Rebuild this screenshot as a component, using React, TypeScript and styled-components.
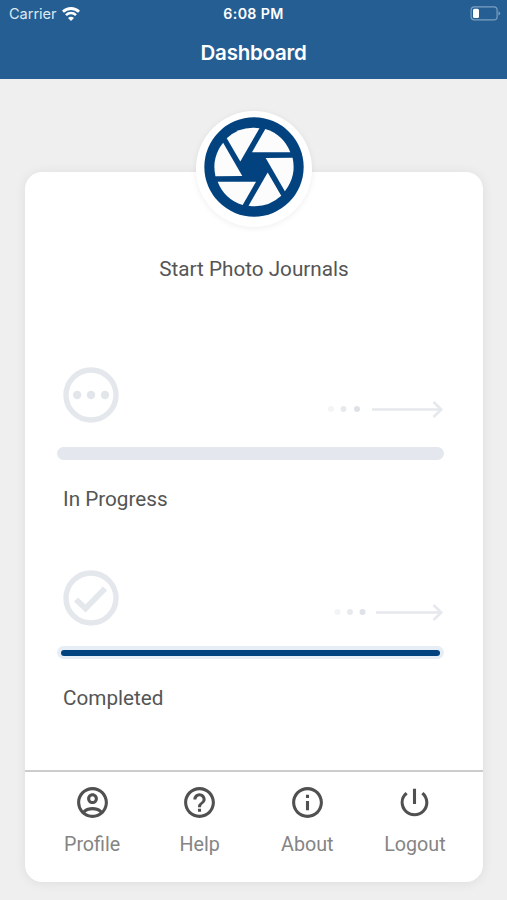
import React from 'react';
import styled, { createGlobalStyle } from 'styled-components';
import {
  MdHelpOutline,
  MdInfoOutline,
  MdOutlineAccountCircle,
  MdPowerSettingsNew,
} from 'react-icons/md';

const GlobalStyle = createGlobalStyle`
  * { box-sizing: border-box; }
  body { margin: 0; background: #efefef; font-family: Roboto, sans-serif; }
`;

const Screen = styled.div`
  width: 507px;
  height: 900px;
  display: flex;
  flex-direction: column;
  overflow: hidden;
  background: #efefef;
`;

const Header = styled.header`
  flex: none;
  height: 79px;
  background: #255e93;
  color: #fff;
  font-family: Inter, sans-serif;
`;

const StatusBar = styled.div`
  height: 27px;
  display: grid;
  grid-template-columns: 1fr auto 1fr;
  align-items: center;
  padding: 0 6px;
`;

const Carrier = styled.div`
  display: flex;
  align-items: center;
  gap: 5px;
  padding-left: 3px;
  font-size: 14.6px;
  line-height: 18px;
  letter-spacing: -0.05px;
  color: #dce8f3;
`;

const Clock = styled.div`
  font-size: 14.2px;
  line-height: 18px;
  font-weight: 600;
  letter-spacing: 0.35px;
`;

const BatterySlot = styled.div`
  display: flex;
  justify-content: flex-end;
`;

const Title = styled.h1`
  margin: 0;
  text-align: center;
  font-size: 20.5px;
  line-height: 51px;
  font-weight: 600;
  letter-spacing: -0.25px;
`;

const Card = styled.main`
  flex: none;
  width: 458px;
  height: 710px;
  margin: 93px 0 0 25px;
  display: flex;
  flex-direction: column;
  background: #fff;
  border-radius: 17px;
  box-shadow: 0 1px 12px rgba(0, 0, 0, 0.08);
`;

const Badge = styled.div`
  flex: none;
  width: 116px;
  height: 116px;
  margin: -61px auto 0;
  padding: 6px 8px;
  border-radius: 50%;
  background: #fff;
  box-shadow: 0 1px 6px rgba(0, 0, 0, 0.07);
  svg { display: block; }
`;

const StartLabel = styled.h2`
  margin: 29px 0 0;
  text-align: center;
  color: #555;
  font-size: 20.7px;
  line-height: 26px;
  font-weight: 400;
`;

const Section = styled.section<{ $top: number }>`
  margin: ${(p) => p.$top}px 39px 0 32px;
  display: flex;
  flex-direction: column;
`;

const SectionTop = styled.div`
  display: flex;
  justify-content: space-between;
  padding: 0 0 0 6px;
  height: 56px;
  svg { display: block; }
`;

const ArrowSlot = styled.div`
  padding-top: 33px;
`;

const Track = styled.div<{ $active?: boolean }>`
  height: 13px;
  margin-top: ${(p) => (p.$active ? 20 : 24)}px;
  padding: ${(p) => (p.$active ? '3.5px 4px' : '0')};
  border-radius: 7px;
  background: ${(p) => (p.$active ? '#e6edf4' : '#e4e8ee')};
`;

const Fill = styled.div`
  height: 6px;
  border-radius: 3px;
  background: #02437f;
`;

const SectionLabel = styled.div`
  margin: 27px 0 0 6px;
  color: #555;
  font-size: 20.7px;
  line-height: 25px;
`;

const TabBar = styled.nav`
  margin-top: auto;
  height: 112px;
  flex: none;
  border-top: 2px solid #ccc;
  display: grid;
  grid-template-columns: repeat(4, 107.6px);
  justify-content: center;
  padding-right: 1px;
`;

const Tab = styled.div`
  display: flex;
  flex-direction: column;
  align-items: center;
  padding-top: 12px;
  color: #505050;
`;

const TabLabel = styled.span`
  margin-top: 12px;
  color: #858585;
  font-size: 19.7px;
  line-height: 24px;
`;

const BLADES = [0, 60, 120, 180, 240, 300];

const Aperture = () => (
  <svg width="100" height="100" viewBox="-150 -150 300 300">
    <circle r="149" fill="#02437f" />
    {BLADES.map((angle) => (
      <path
        key={angle}
        d="M34 -114A119 119 0 0 1 109 -44H-6Z"
        fill="#fcfcfd"
        transform={`rotate(${angle})`}
      />
    ))}
  </svg>
);

const Wifi = () => (
  <svg width="18" height="14" viewBox="0 0 18 14" fill="none" stroke="#fff">
    <path d="M1 4.8C5.5.4 12.5.4 17 4.8" strokeWidth="2.8" />
    <path d="M4 8.2C6.8 5.4 11.2 5.4 14 8.2" strokeWidth="2.5" />
    <path d="M9 13.9 6 11Q9 8.3 12 11Z" fill="#fff" stroke="none" />
  </svg>
);

const Battery = () => (
  <svg width="31" height="15" viewBox="0 0 31 15">
    <rect x="1.1" y=".9" width="26" height="13" rx="3.2" fill="none" stroke="#7d9fc0" strokeWidth="1.2" />
    <rect x="3" y="2.7" width="6" height="9.4" rx="1.5" fill="#fff" />
    <path d="M28.5 5.2Q32 7.4 28.5 9.6Z" fill="#7d9fc0" />
  </svg>
);

const StatusIcon = ({ done }: { done?: boolean }) => (
  <svg width="56" height="56" viewBox="0 0 56 56" fill="none" stroke="#e4e8ec">
    <circle cx="28" cy="28" r="25" strokeWidth="5.4" />
    {done ? (
      <path d="M13 29.5 22.5 38.5 42 18.5" strokeWidth="5.8" />
    ) : (
      <g fill="#e2e6eb" stroke="none">
        <circle cx="14.2" cy="28" r="4.2" />
        <circle cx="28" cy="28" r="4.2" />
        <circle cx="42" cy="28" r="4.2" />
      </g>
    )}
  </svg>
);

const Arrow = ({ done }: { done?: boolean }) => (
  <svg width="118" height="18" viewBox="0 0 118 18">
    <g fill="#dfe3e7">
      <circle cx={done ? 11.5 : 5} cy="9" r="3" opacity=".4" />
      <circle cx={done ? 24 : 17.5} cy="9" r="3" opacity=".75" />
      <circle cx={done ? 36.5 : 31} cy="9" r="3" />
    </g>
    <path
      d={`M${done ? 50 : 46} 9.5H115M107.5 2 115.3 9.5 107.5 17`}
      fill="none"
      stroke="#e5e8ed"
      strokeWidth="2.5"
    />
  </svg>
);

const TABS = [
  { label: 'Profile', Icon: MdOutlineAccountCircle },
  { label: 'Help', Icon: MdHelpOutline },
  { label: 'About', Icon: MdInfoOutline },
  { label: 'Logout', Icon: MdPowerSettingsNew },
];

export default function App() {
  return (
    <Screen>
      <GlobalStyle />
      <Header>
        <StatusBar>
          <Carrier>Carrier<Wifi /></Carrier>
          <Clock>6:08 PM</Clock>
          <BatterySlot><Battery /></BatterySlot>
        </StatusBar>
        <Title>Dashboard</Title>
      </Header>
      <Card>
        <Badge><Aperture /></Badge>
        <StartLabel>Start Photo Journals</StartLabel>
        <Section $top={85}>
          <SectionTop>
            <StatusIcon />
            <ArrowSlot><Arrow /></ArrowSlot>
          </SectionTop>
          <Track />
          <SectionLabel>In Progress</SectionLabel>
        </Section>
        <Section $top={58}>
          <SectionTop>
            <StatusIcon done />
            <ArrowSlot><Arrow done /></ArrowSlot>
          </SectionTop>
          <Track $active><Fill /></Track>
          <SectionLabel>Completed</SectionLabel>
        </Section>
        <TabBar>
          {TABS.map(({ label, Icon }) => (
            <Tab key={label}>
              <Icon size={37} />
              <TabLabel>{label}</TabLabel>
            </Tab>
          ))}
        </TabBar>
      </Card>
    </Screen>
  );
}
